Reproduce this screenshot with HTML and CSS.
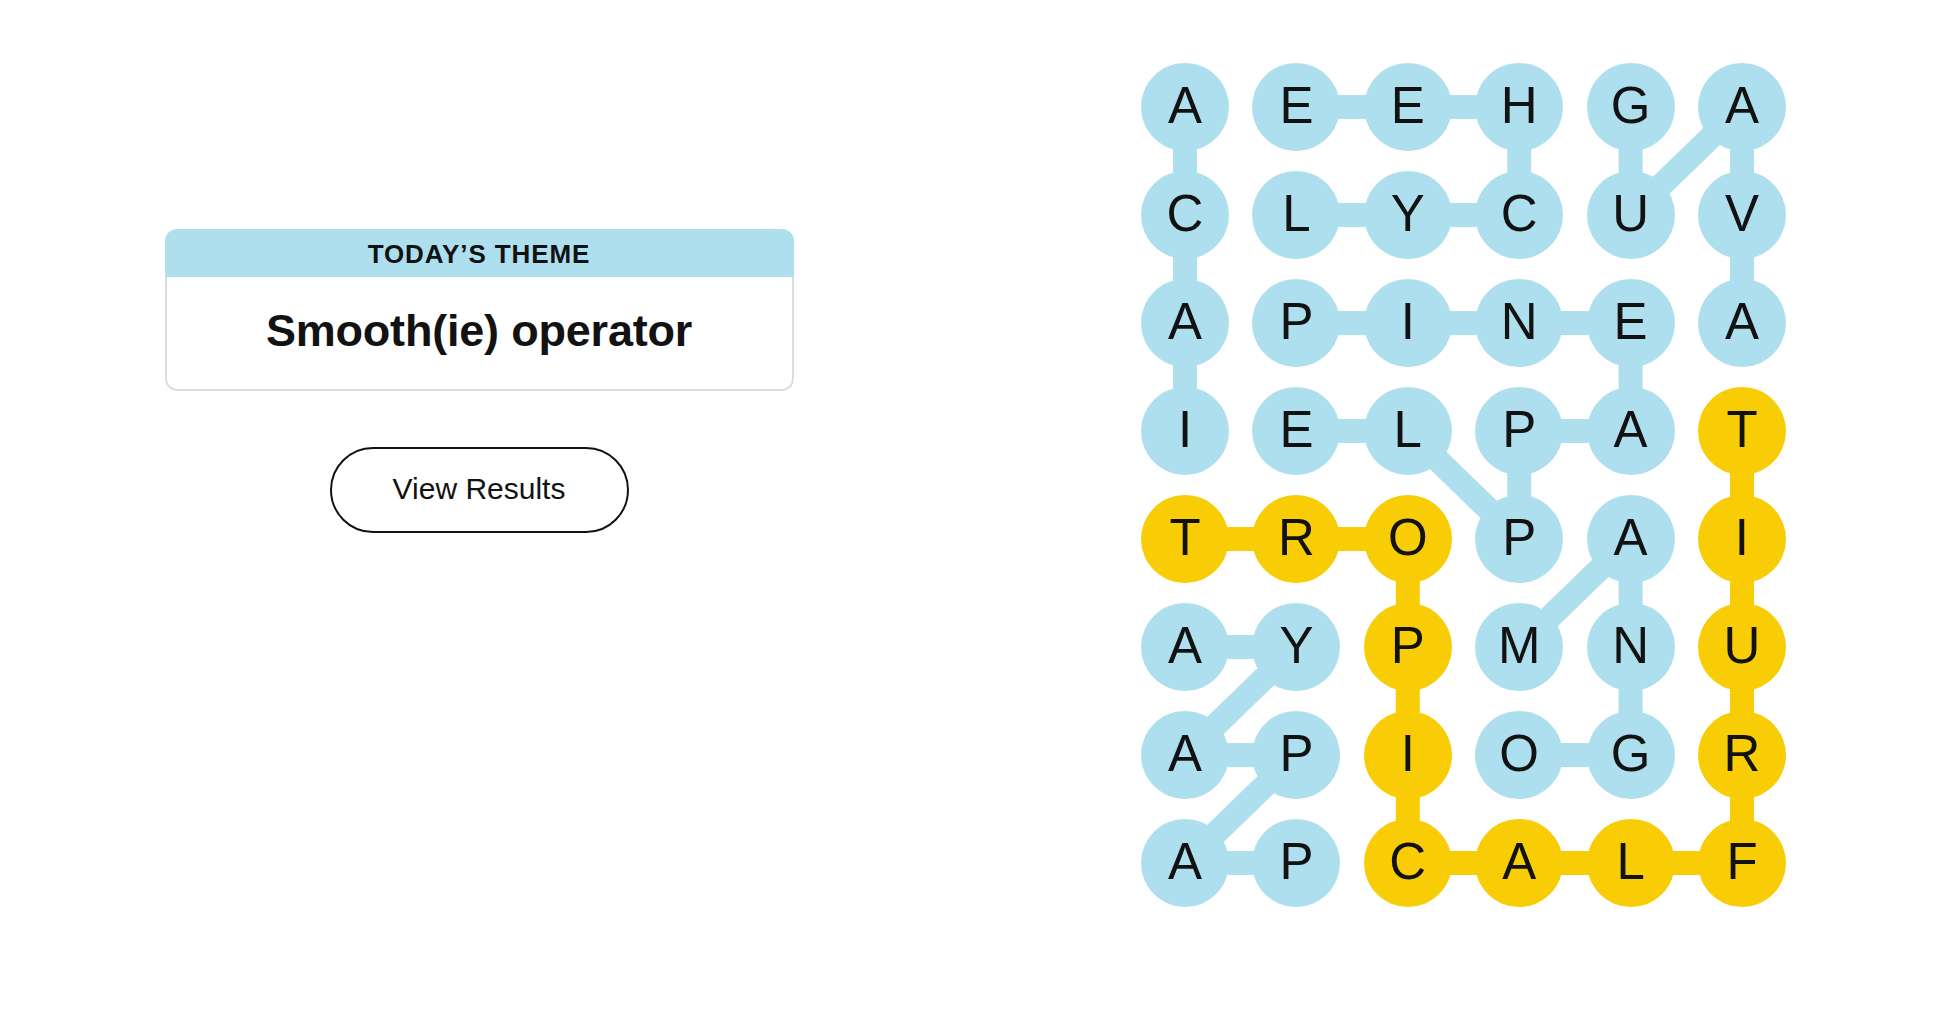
FILE: index.html
```html
<!DOCTYPE html>
<html lang="en">
<head>
<meta charset="utf-8">
<title>Strands</title>
<link rel="stylesheet" href="styles.css">
</head>
<body>
<main class="page">
  <section class="info">
    <div class="theme-card">
      <div class="theme-header">TODAY’S THEME</div>
      <div class="theme-body"><h1 class="theme-title">Smooth(ie) operator</h1></div>
    </div>
    <button class="results-btn" type="button">View Results</button>
  </section>
  <section class="board-wrap">
    <div class="board">
      <svg class="links" width="645" height="844" viewBox="0 0 645 844" aria-hidden="true">
        <g class="link-blue">
          <!-- ACAI -->
          <line x1="44" y1="44" x2="44" y2="152"/>
          <line x1="44" y1="152" x2="44" y2="260"/>
          <line x1="44" y1="260" x2="44" y2="368"/>
          <!-- LYCHEE -->
          <line x1="155.4" y1="152" x2="266.8" y2="152"/>
          <line x1="266.8" y1="152" x2="378.2" y2="152"/>
          <line x1="378.2" y1="152" x2="378.2" y2="44"/>
          <line x1="378.2" y1="44" x2="266.8" y2="44"/>
          <line x1="266.8" y1="44" x2="155.4" y2="44"/>
          <!-- GUAVA -->
          <line x1="489.6" y1="44" x2="489.6" y2="152"/>
          <line x1="489.6" y1="152" x2="601" y2="44"/>
          <line x1="601" y1="44" x2="601" y2="152"/>
          <line x1="601" y1="152" x2="601" y2="260"/>
          <!-- PINEAPPLE -->
          <line x1="155.4" y1="260" x2="266.8" y2="260"/>
          <line x1="266.8" y1="260" x2="378.2" y2="260"/>
          <line x1="378.2" y1="260" x2="489.6" y2="260"/>
          <line x1="489.6" y1="260" x2="489.6" y2="368"/>
          <line x1="489.6" y1="368" x2="378.2" y2="368"/>
          <line x1="378.2" y1="368" x2="378.2" y2="476"/>
          <line x1="378.2" y1="476" x2="266.8" y2="368"/>
          <line x1="266.8" y1="368" x2="155.4" y2="368"/>
          <!-- MANGO -->
          <line x1="378.2" y1="584" x2="489.6" y2="476"/>
          <line x1="489.6" y1="476" x2="489.6" y2="584"/>
          <line x1="489.6" y1="584" x2="489.6" y2="692"/>
          <line x1="489.6" y1="692" x2="378.2" y2="692"/>
          <!-- PAPAYA -->
          <line x1="155.4" y1="800" x2="44" y2="800"/>
          <line x1="44" y1="800" x2="155.4" y2="692"/>
          <line x1="155.4" y1="692" x2="44" y2="692"/>
          <line x1="44" y1="692" x2="155.4" y2="584"/>
          <line x1="155.4" y1="584" x2="44" y2="584"/>
        </g>
        <g class="link-yellow">
          <line x1="44" y1="476" x2="155.4" y2="476"/>
          <line x1="155.4" y1="476" x2="266.8" y2="476"/>
          <line x1="266.8" y1="476" x2="266.8" y2="584"/>
          <line x1="266.8" y1="584" x2="266.8" y2="692"/>
          <line x1="266.8" y1="692" x2="266.8" y2="800"/>
          <line x1="266.8" y1="800" x2="378.2" y2="800"/>
          <line x1="378.2" y1="800" x2="489.6" y2="800"/>
          <line x1="489.6" y1="800" x2="601" y2="800"/>
          <line x1="601" y1="800" x2="601" y2="692"/>
          <line x1="601" y1="692" x2="601" y2="584"/>
          <line x1="601" y1="584" x2="601" y2="476"/>
          <line x1="601" y1="476" x2="601" y2="368"/>
        </g>
      </svg>

      <div class="cell found">A</div><div class="cell found">E</div><div class="cell found">E</div><div class="cell found">H</div><div class="cell found">G</div><div class="cell found">A</div>
      <div class="cell found">C</div><div class="cell found">L</div><div class="cell found">Y</div><div class="cell found">C</div><div class="cell found">U</div><div class="cell found">V</div>
      <div class="cell found">A</div><div class="cell found">P</div><div class="cell found">I</div><div class="cell found">N</div><div class="cell found">E</div><div class="cell found">A</div>
      <div class="cell found">I</div><div class="cell found">E</div><div class="cell found">L</div><div class="cell found">P</div><div class="cell found">A</div><div class="cell spangram">T</div>
      <div class="cell spangram">T</div><div class="cell spangram">R</div><div class="cell spangram">O</div><div class="cell found">P</div><div class="cell found">A</div><div class="cell spangram">I</div>
      <div class="cell found">A</div><div class="cell found">Y</div><div class="cell spangram">P</div><div class="cell found">M</div><div class="cell found">N</div><div class="cell spangram">U</div>
      <div class="cell found">A</div><div class="cell found">P</div><div class="cell spangram">I</div><div class="cell found">O</div><div class="cell found">G</div><div class="cell spangram">R</div>
      <div class="cell found">A</div><div class="cell found">P</div><div class="cell spangram">C</div><div class="cell spangram">A</div><div class="cell spangram">L</div><div class="cell spangram">F</div>
    </div>
  </section>
</main>
</body>
</html>
```

FILE: styles.css
```css
* {
  box-sizing: border-box;
}

html, body {
  margin: 0;
  padding: 0;
  background: #ffffff;
}

body {
  font-family: "Liberation Sans", Arial, sans-serif;
  color: #121212;
  width: 1954px;
  height: 1016px;
  overflow: hidden;
}

.page {
  display: flex;
  align-items: flex-start;
}

.info {
  width: 958px;
  padding-top: 229px;
  display: flex;
  flex-direction: column;
  align-items: center;
}

.theme-card {
  width: 629px;
  border-radius: 12px;
  overflow: hidden;
}

.theme-header {
  height: 48px;
  background: #aedfee;
  display: flex;
  align-items: center;
  justify-content: center;
  font-size: 26px;
  font-weight: 700;
  letter-spacing: 0.9px;
  padding-top: 2px;
}

.theme-body {
  height: 114px;
  border: 2px solid #dcdcdc;
  border-top: none;
  border-radius: 0 0 12px 12px;
  display: flex;
  align-items: center;
  justify-content: center;
}

.theme-title {
  margin: 0;
  font-size: 45px;
  font-weight: 700;
  letter-spacing: -0.2px;
  line-height: 1;
  padding-bottom: 6px;
}

.results-btn {
  margin-top: 56px;
  width: 299px;
  height: 86px;
  border: 2px solid #121212;
  border-radius: 43px;
  background: #ffffff;
  color: #121212;
  font-family: "Liberation Sans", Arial, sans-serif;
  font-size: 30px;
  font-weight: 400;
  padding: 0 0 2px;
}

.board-wrap {
  padding-left: 183px;
  padding-top: 62.7px;
}

.board {
  position: relative;
  display: grid;
  grid-template-columns: repeat(6, 88px);
  grid-auto-rows: 88px;
  column-gap: 23.4px;
  row-gap: 20px;
}

.links {
  position: absolute;
  left: 0;
  top: 0;
  z-index: 0;
}

.links line {
  stroke-width: 24;
  stroke-linecap: butt;
}

.link-blue line {
  stroke: #aedfee;
}

.link-yellow line {
  stroke: #f8cd05;
}

.cell {
  position: relative;
  z-index: 1;
  width: 88px;
  height: 88px;
  border-radius: 50%;
  display: flex;
  align-items: center;
  justify-content: center;
  font-size: 51px;
  line-height: 1;
  padding-bottom: 3px;
  color: #121212;
}

.found {
  background: #aedfee;
}

.spangram {
  background: #f8cd05;
}
```
